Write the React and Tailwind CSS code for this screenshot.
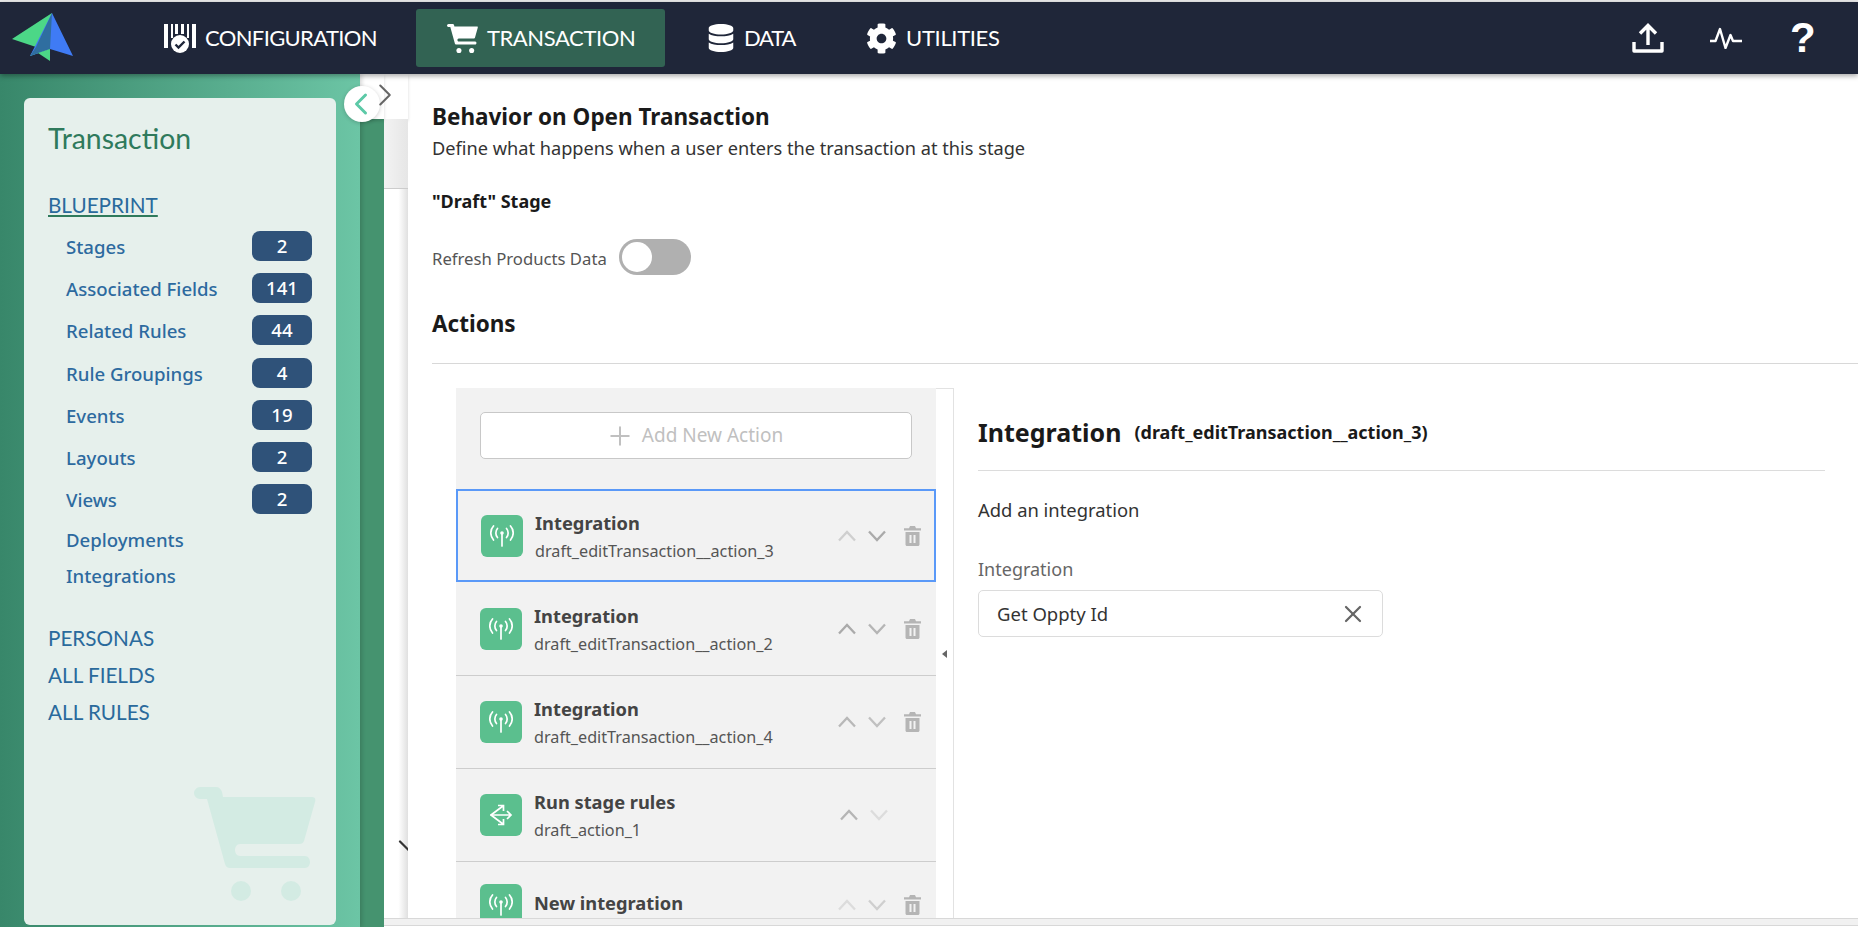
import React from "react";
import { FaDatabase, FaCog } from "react-icons/fa";
import { X, Plus, ChevronDown, ChevronLeft, ChevronRight } from "lucide-react";

const ui = "font-['Noto_Sans','Open_Sans',sans-serif]";
const head = "font-['Lato','Noto_Sans',sans-serif]";

function Logo() {
  return (
    <svg width="62" height="50" viewBox="0 0 62 50" className="ml-[12px] shrink-0">
      <polygon points="40,0 0,26 24,34 18,43 38,36" fill="#4cd787" />
      <polygon points="40,0 61,43 38,36 18,43" fill="#3f7bf5" />
      <polygon points="40,0 24,34 18,43 38,36" fill="#2f6ea0" />
      <polygon points="26,40 38,36 38,48" fill="#4cd787" />
    </svg>
  );
}

function ConfigIcon() {
  return (
    <svg width="32" height="29" viewBox="0 0 32 29" className="shrink-0">
      <g fill="#fff">
        <rect x="0" y="0" width="4" height="24" />
        <rect x="7" y="0" width="2" height="14" />
        <rect x="11" y="0" width="3" height="10" />
        <rect x="17" y="0" width="3" height="10" />
        <rect x="23" y="0" width="2" height="14" />
        <rect x="28" y="0" width="4" height="24" />
        <circle cx="16" cy="20" r="9" />
      </g>
      <path d="M11.5 20.500l3 3 6-6" fill="none" stroke="#1f2639" strokeWidth="2.4" />
    </svg>
  );
}

function NavItem({ icon, label, active, className, tracking }) {
  return (
    <div className={`h-[58px] flex items-center gap-[9px] rounded-[3px] ${active ? "bg-[#326353]" : ""} ${className}`}>
      {icon}
      <span className={`${head} text-[22px] leading-none text-white ${tracking}`}>{label}</span>
    </div>
  );
}

function UploadIcon() {
  return (
    <svg width="32" height="30" viewBox="0 0 32 30" fill="none" stroke="#fff" strokeWidth="3.4">
      <path d="M16 22V3M8 10.500L16 2.500l8 8" />
      <path d="M2 19v9h28v-9" strokeLinejoin="round" />
    </svg>
  );
}

function PulseIcon() {
  return (
    <svg width="32" height="22" viewBox="0 0 32 22" fill="none" stroke="#fff" strokeWidth="2.4" strokeLinejoin="round">
      <path d="M0 14h5.500L10 2l5.500 19 5-13 2.500 6h9" />
    </svg>
  );
}

const cartPath =
  "M6 0h16c3 0 5 2 6 5l1 5h89c3 0 4 2 3 5l-11 39c-1 2-2 3-5 3H46c-3 0-5 3-5 6s2 6 5 6h65c3 0 5 3 5 6s-2 6-5 6H36c-2 0-4-1-5-4L13 12H6C3 12 0 9 0 6s3-6 6-6z";

function NavCart() {
  return (
    <svg viewBox="0 0 122 114" width="31" height="29" fill="#fff" className="shrink-0">
      <path d={cartPath} />
      <circle cx="47" cy="104" r="10" />
      <circle cx="97" cy="104" r="10" />
    </svg>
  );
}

function SideRow({ label, count }) {
  return (
    <div className="h-[30px] mb-[12.2px] flex items-center justify-between pl-[18px] pr-[24px]">
      <span className={`${ui} text-[18.6px] font-medium text-[#2d6a9f] relative top-px`}>{label}</span>
      <span className={`${ui} w-[60px] h-[30px] rounded-[8px] bg-[#2f5279] text-white text-[18.6px] font-medium flex items-center justify-center`}>{count}</span>
    </div>
  );
}

function WatermarkCart() {
  return (
    <svg viewBox="0 0 122 114" className="absolute left-[170px] bottom-[24px] w-[122px] h-[114px]" fill="#d3ebe3">
      <path d={cartPath} />
      <circle cx="47" cy="104" r="10" />
      <circle cx="97" cy="104" r="10" />
    </svg>
  );
}

function Signal() {
  return (
    <svg width="24" height="22" viewBox="0 0 24 22" fill="none" stroke="#fff" strokeWidth="1.7" strokeLinecap="round">
      <circle cx="12" cy="8" r="1.800" fill="#fff" stroke="none" />
      <path d="M12 8v13" />
      <path d="M7.500 3.500c-2.200 2.500-2.200 6.500 0 9M16.500 3.500c2.200 2.500 2.200 6.500 0 9" />
      <path d="M3.500 1c-3.600 4-3.600 10 0 14M20.500 1c3.600 4 3.600 10 0 14" />
    </svg>
  );
}

function Branch() {
  return (
    <svg width="24" height="24" viewBox="0 0 24 24" fill="none" stroke="#fff" strokeWidth="1.7">
      <path d="M1 12h21M18 8l4 4-4 4" />
      <path d="M2 12L14 3M9 2.500h5.500V8" />
      <path d="M2 12l12 9M9 21.500h5.500V16" />
    </svg>
  );
}

function Trash({ className }) {
  return (
    <svg width="17" height="20" viewBox="0 0 17 20" className={className} fill="#b5b5b5">
      <path d="M6 0h5l1 2.200h5V4.400H0V2.200h5z" />
      <path fillRule="evenodd" d="M1.500 6h14v12.500c0 .8-.7 1.500-1.500 1.500H3c-.8 0-1.500-.7-1.500-1.500zM5.500 9v8h2V9zM9.500 9v8h2V9z" />
    </svg>
  );
}

function Chev({ color, down }) {
  return (
    <svg width="18" height="12" viewBox="0 0 18 12" fill="none" stroke={color} strokeWidth="2.300" className="shrink-0">
      <path d={down ? "M1 1.500l8 8.500 8-8.500" : "M1 10.500L9 2l8 8.500"} />
    </svg>
  );
}

function Item({ icon, title, sub, up, down, trash = true, selected, last }) {
  const textPad = selected ? "pt-[3px]" : sub ? "pt-[1px]" : "pb-[4px]";
  return (
    <div
      className={`flex items-center shrink-0 ${last ? "h-[86px]" : "h-[93px]"} ${
        selected ? "border-2 border-[#5a99f8] pl-[23px] pr-[13px] mb-px" : `pl-[24px] pr-[15px] ${last ? "" : "border-b border-[#cdcdcd]"}`
      }`}
    >
      <div className="w-[42px] h-[42px] rounded-[6px] bg-[#5bbf8e] flex items-center justify-center shrink-0">{icon}</div>
      <div className={`${ui} ml-[12px] flex-1 min-w-0 ${textPad}`}>
        <div className="text-[18.300px] leading-[28px] font-bold text-[#444]">{title}</div>
        {sub && <div className="text-[16.200px] leading-[28px] text-[#555]">{sub}</div>}
      </div>
      <div className="flex items-center">
        <Chev color={up} />
        <span className="w-[12px]" />
        <Chev color={down} down />
        {trash ? <Trash className="ml-[18px]" /> : <span className="w-[33px]" />}
      </div>
    </div>
  );
}

export default function App() {
  return (
    <div className={`${ui} w-[1858px] h-[927px] overflow-hidden flex flex-col bg-white`}>
      <div className="h-[2px] bg-[#e9e9e9] shrink-0" />
      <header className="h-[72px] shrink-0 bg-[#1f2639] flex items-center shadow-[0_2px_5px_rgba(0,0,0,0.35)] relative z-20">
        <Logo />
        <NavItem icon={<ConfigIcon />} label="CONFIGURATION" tracking="tracking-[-0.65px]" className="ml-[90px]" />
        <NavItem active icon={<NavCart />} label="TRANSACTION" tracking="tracking-[-0.4px]" className="ml-[39px] w-[249px] pl-[31px]" />
        <NavItem icon={<FaDatabase size={28} color="#fff" />} label="DATA" tracking="tracking-[-1.2px]" className="ml-[42px]" />
        <NavItem icon={<FaCog size={31} color="#fff" />} label="UTILITIES" tracking="tracking-[-0.35px]" className="ml-[71px]" />
        <div className="ml-auto flex items-center pr-[44px]">
          <UploadIcon />
          <span className="ml-[46px]"><PulseIcon /></span>
          <span className="ml-[48px] w-[24px] text-center text-white text-[42px] leading-none font-bold font-['Liberation_Sans',sans-serif]">?</span>
        </div>
      </header>

      <div className="flex-1 min-h-0 flex relative">
        <aside className="w-[360px] shrink-0 bg-gradient-to-r from-[#38876a] to-[#6cc5a5] pt-[24px] pb-[2px] px-[24px] relative z-10 shadow-[2px_0_4px_rgba(0,0,0,0.15)]">
          <div className="h-full rounded-[6px] bg-[#e6f0ec] relative pl-[24px] pt-[22px]">
            <div className={`${head} text-[28.400px] leading-[36px] text-[#2f7a5c]`}>Transaction</div>
            <div className={`${head} mt-[37px] text-[20.700px] leading-[24px] text-[#2a6a9c] underline decoration-[#2f7a5c] underline-offset-2`}>BLUEPRINT</div>
            <div className="mt-[14px]">
              <SideRow label="Stages" count="2" />
              <SideRow label="Associated Fields" count="141" />
              <SideRow label="Related Rules" count="44" />
              <SideRow label="Rule Groupings" count="4" />
              <SideRow label="Events" count="19" />
              <SideRow label="Layouts" count="2" />
              <SideRow label="Views" count="2" />
            </div>
            <div className="pl-[18px] text-[18.600px] font-medium text-[#2d6a9f] leading-[24px] mt-[14px]">Deployments</div>
            <div className="pl-[18px] text-[18.600px] font-medium text-[#2d6a9f] leading-[24px] mt-[12px]">Integrations</div>
            <div className={`${head} mt-[38px] text-[20.700px] leading-[24px] text-[#2a6a9c]`}>PERSONAS</div>
            <div className={`${head} mt-[13px] text-[20.700px] leading-[24px] text-[#2a6a9c]`}>ALL FIELDS</div>
            <div className={`${head} mt-[13px] text-[20.700px] leading-[24px] text-[#2a6a9c]`}>ALL RULES</div>
            <WatermarkCart />
          </div>
        </aside>

        <div className="absolute left-[344px] top-[12px] w-[36px] h-[36px] rounded-full bg-white shadow-[0_1px_4px_rgba(0,0,0,0.2)] z-30 flex items-center justify-center">
          <ChevronLeft size={36} strokeWidth={2} color="#5cc9a7" className="shrink-0 ml-[-3px]" />
        </div>
        <ChevronRight size={38} strokeWidth={1.3} color="#666" className="absolute left-[366px] top-[2px] z-30" />

        <div className="w-[24px] shrink-0 flex flex-col">
          <div className="h-[45px] bg-white shadow-[0_2px_3px_rgba(0,0,0,0.15)] relative z-[1]" />
          <div className="flex-1 bg-[#45936f]" />
        </div>

        <div className="flex-1 min-w-0 flex flex-col">
          <div className="flex-1 min-h-0 flex overflow-hidden">
            <div className="w-[24px] shrink-0 flex flex-col relative">
              <div className="h-[45px] bg-white shadow-[0_2px_3px_rgba(0,0,0,0.15)]" />
              <div className="h-[70px] bg-gradient-to-r from-[#f3f3f3] to-[#e6e6e6] border-b border-[#ccc]" />
              <div className="flex-1 bg-gradient-to-r from-white from-60% to-[#e0e0e0] relative overflow-hidden">
                <ChevronDown size={36} strokeWidth={1.5} color="#333" className="absolute left-[7px] top-[639px]" />
              </div>
            </div>

            <main className="flex-1 min-w-0 bg-white pt-[29px] pl-[24px] overflow-hidden">
              <h1 className="text-[22.500px] leading-[28px] font-bold text-[#1a1a1a]">Behavior on Open Transaction</h1>
              <p className="mt-[4px] text-[18.200px] leading-[26px] text-[#333]">Define what happens when a user enters the transaction at this stage</p>
              <div className="mt-[28px] text-[18px] leading-[24px] font-bold text-[#1a1a1a]">"Draft" Stage</div>
              <div className="mt-[26px] flex items-center h-[36px]">
                <span className="text-[16.700px] text-[#555] relative top-[2px]">Refresh Products Data</span>
                <span className="ml-[12px] w-[72px] h-[36px] rounded-full bg-[#b0b0b0] p-[3px] flex">
                  <span className="w-[30px] h-[30px] rounded-full bg-white" />
                </span>
              </div>
              <h2 className="mt-[34px] text-[22.500px] leading-[30px] font-bold text-[#1a1a1a]">Actions</h2>
              <div className="mt-[24px] h-px bg-[#d8d8d8]" />

              <div className="mt-[24px] ml-[24px] flex items-start">
                <div className="w-[480px] shrink-0 bg-[#f2f2f2] pt-[24px] flex flex-col h-[531px] overflow-hidden">
                  <div className="mx-[24px] h-[47px] shrink-0 rounded-[5px] border border-[#c8c8c8] bg-white flex items-center justify-center gap-[7px] text-[#c0c0c0]">
                    <Plus size={30} strokeWidth={1.6} color="#c0c0c0" className="ml-[-4px]" />
                    <span className="text-[19px]">Add New Action</span>
                  </div>
                  <div className="h-[30px] shrink-0" />
                  <Item selected icon={<Signal />} title="Integration" sub="draft_editTransaction__action_3" up="#cfcfcf" down="#aaaaaa" />
                  <Item icon={<Signal />} title="Integration" sub="draft_editTransaction__action_2" up="#aaaaaa" down="#b5b5b5" />
                  <Item icon={<Signal />} title="Integration" sub="draft_editTransaction__action_4" up="#b8b8b8" down="#c0c0c0" />
                  <Item icon={<Branch />} title="Run stage rules" sub="draft_action_1" up="#b5b5b5" down="#dcdcdc" trash={false} />
                  <Item last icon={<Signal />} title="New integration" up="#dcdcdc" down="#cfcfcf" />
                </div>

                <div className="w-[18px] h-[531px] shrink-0 border-r border-t border-[#e2e2e2] bg-white flex items-center pl-[6px]">
                  <span className="w-0 h-0 border-y-[4px] border-y-transparent border-r-[5px] border-r-[#666]" />
                </div>

                <div className="flex-1 min-w-0 pl-[24px] pr-[33px] pt-[28px]">
                  <div className="flex items-center h-[34px]">
                    <span className="text-[25px] font-bold text-[#1a1a1a]">Integration</span>
                    <span className="ml-[13px] text-[18px] font-bold text-[#1a1a1a] relative top-[-1px]">(draft_editTransaction__action_3)</span>
                  </div>
                  <div className="mt-[20px] h-px bg-[#dcdcdc]" />
                  <div className="mt-[26px] text-[18.400px] leading-[26px] text-[#333]">Add an integration</div>
                  <div className="mt-[34px] text-[18px] leading-[24px] text-[#666]">Integration</div>
                  <div className="mt-[9px] w-[405px] h-[47px] rounded-[5px] border border-[#dcdcdc] flex items-center justify-between pl-[18px] pr-[15px]">
                    <span className="text-[18.500px] text-[#333]">Get Oppty Id</span>
                    <X size={28} strokeWidth={1.9} color="#666" />
                  </div>
                </div>
              </div>
            </main>
          </div>
          <div className="h-[8px] shrink-0 bg-[#f1f1f1] border-y border-[#d8d8d8] mb-px" />
        </div>
      </div>
    </div>
  );
}
